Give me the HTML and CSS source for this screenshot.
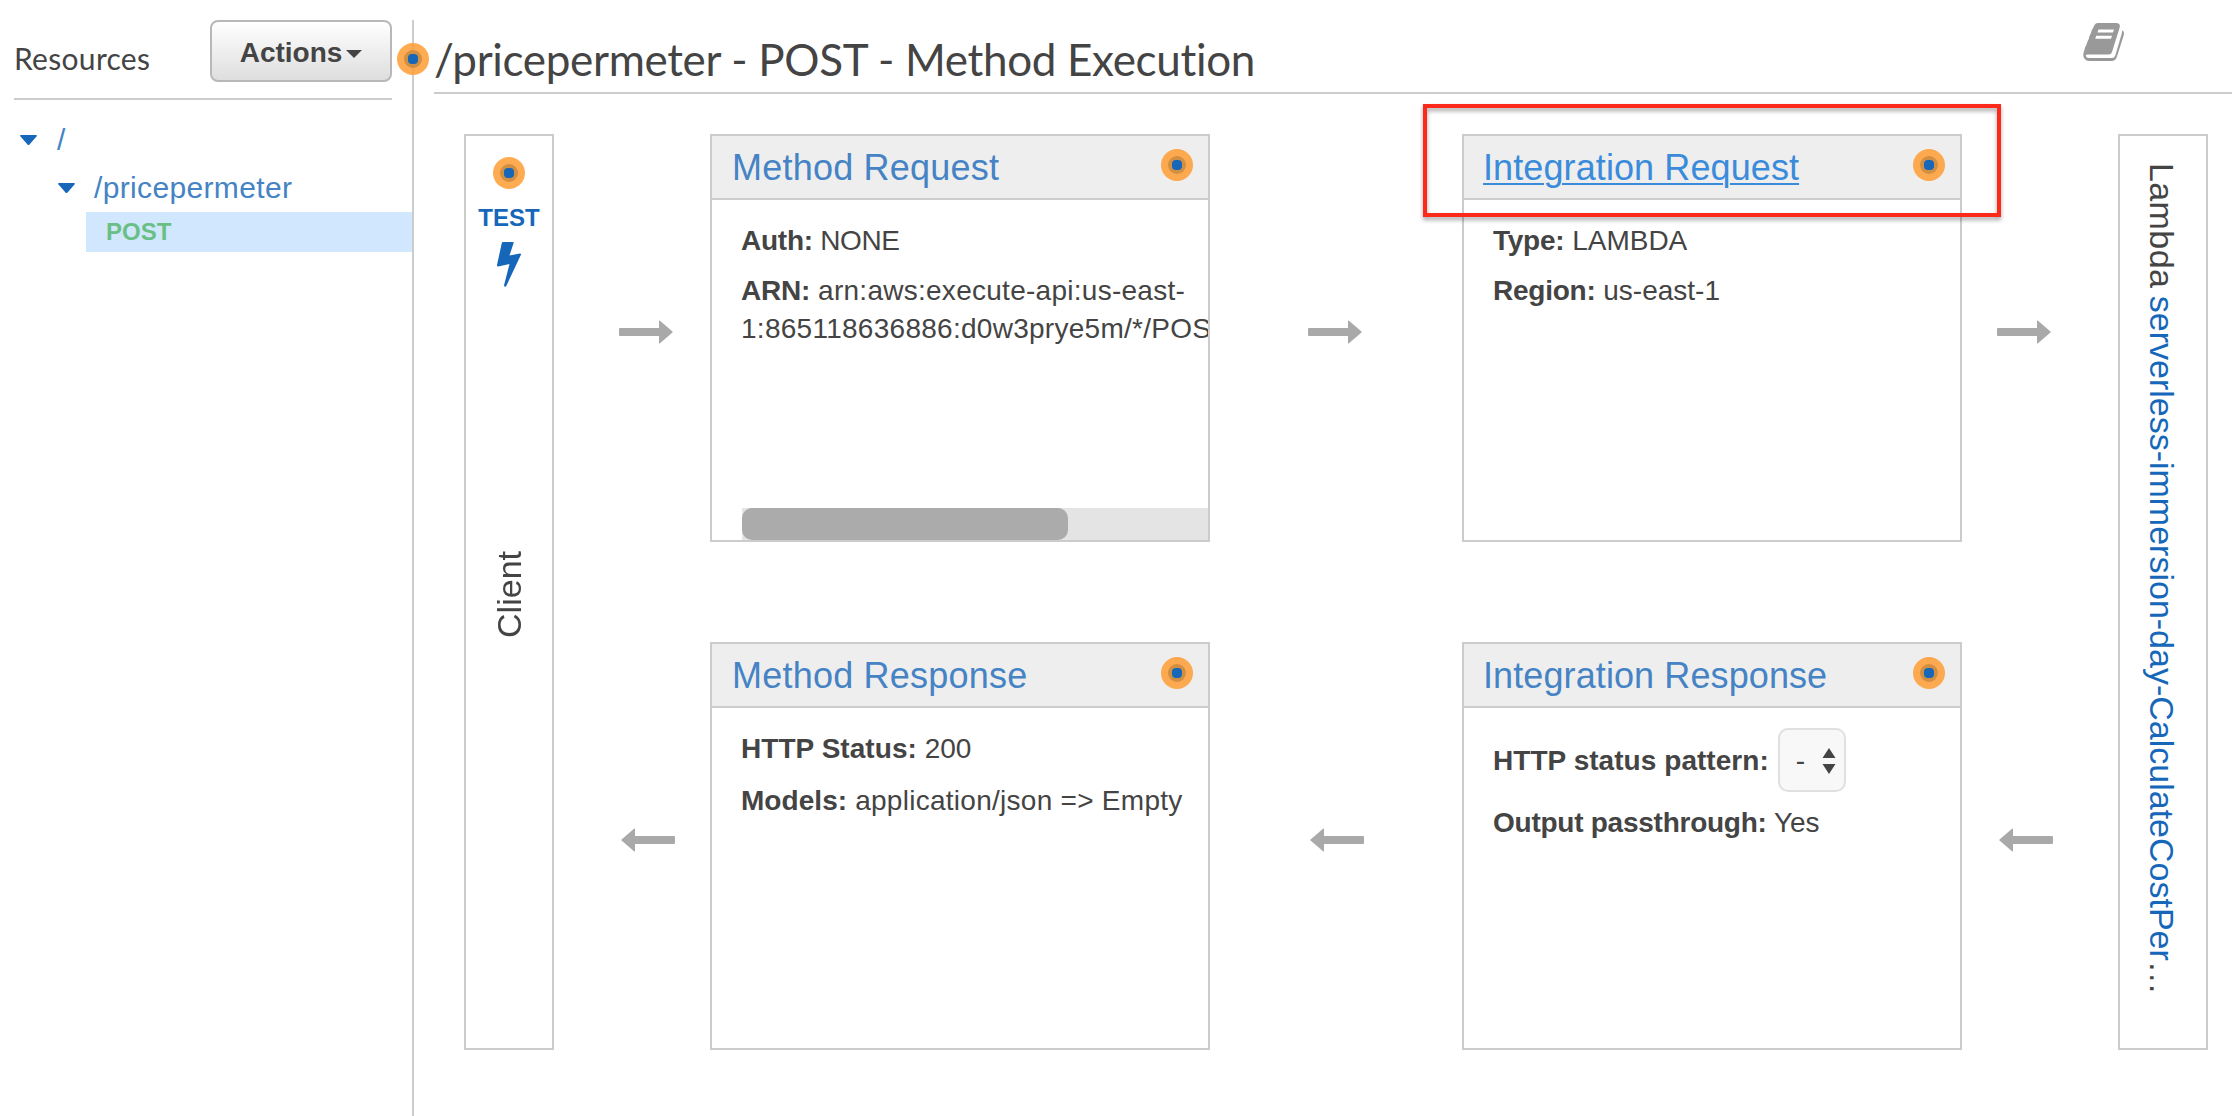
FILE: index.html
```html
<!DOCTYPE html>
<html lang="en">
<head>
<meta charset="utf-8">
<title>Method Execution</title>
<link rel="stylesheet" href="styles.css">
</head>
<body>
<svg class="defs" aria-hidden="true">
  <symbol id="arrow" viewBox="0 0 54 24"><path d="M1 8H40V1Q40 0 41 .8L54 12L41 23.2Q40 24 40 23V16H1Q0 16 0 15V9Q0 8 1 8Z"/></symbol>
  <symbol id="hotspot" viewBox="0 0 32 32">
    <circle cx="16" cy="16" r="16" fill="#ff9d35" fill-opacity=".86"/>
    <circle cx="16" cy="16" r="9" fill="#d08f43"/>
    <rect x="11" y="11" width="10" height="10" rx="4" fill="#1667ba"/>
  </symbol>
</svg>
<div class="app">
  <aside class="sidebar">
    <div class="sidebar-head">
      <h2 class="sidebar-title">Resources</h2>
      <button class="actions">Actions<svg class="actions-caret" viewBox="0 0 16 8"><path d="M0 0H16L8 8Z"/></svg></button>
    </div>
    <div class="tree">
      <div class="node node-root"><svg class="caret" viewBox="0 0 17 10"><path d="M1 0H16Q17.500 0 16.500 1.500L9.500 9.500Q8.500 10.500 7.500 9.500L.5 1.500Q-.5 0 1 0Z"/></svg><span>/</span></div>
      <div class="node node-child"><svg class="caret" viewBox="0 0 17 10"><path d="M1 0H16Q17.500 0 16.500 1.500L9.500 9.500Q8.500 10.500 7.500 9.500L.5 1.500Q-.5 0 1 0Z"/></svg><span class="node-name">/pricepermeter</span></div>
      <div class="verb">POST</div>
    </div>
  </aside>
  <main class="main">
    <svg class="hotspot pane-hotspot"><use href="#hotspot"/></svg>
    <header class="main-head">
      <h1 class="title"><span class="title-text">/pricepermeter - POST - Method Execution</span></h1>
      <svg class="book" viewBox="0 0 42 38"><path fill-rule="evenodd" d="M15 0H33Q38 0 36.500 5L29 29Q28.200 31.500 25.500 31.500H5Q2.500 31.500 2.800 33Q3.200 35 6 35H29Q31.500 35 32.300 32.500L38.500 11.500Q39.200 9.500 39 7.500Q41.800 8.500 40.800 12L34 33.500Q32.500 38 28.500 38H6.500Q2.500 38 .8 34.500Q-.2 32.500 .8 29Q1.500 27 2 24.500Q3.500 22.500 4.300 19Q6 16.500 6.500 13Q8.300 10 8.800 7Q10.500 4.500 11.500 2Q12.500 0 15 0ZM15.500 6.500L14.500 9.500H30L31 6.500ZM13.200 12.800L12.200 15.800H28L29 12.800Z"/></svg>
    </header>
    <section class="flow">
      <div class="endpoint client">
        <svg class="hotspot"><use href="#hotspot"/></svg>
        <span class="test">TEST</span>
        <svg class="bolt" viewBox="0 0 24 45"><path d="M6 0H16Q17 0 16.600 1L12.500 13.500L23 11.500Q24.500 11.400 23.800 13L9.300 44Q8.500 45.200 7.500 44.500Q7 44 7.100 43L12.500 22L1.200 24.500Q-.2 24.600 0 23L4.800 1Q5 0 6 0Z"/></svg>
        <div class="client-slot"><span class="client-label">Client</span></div>
      </div>
      <svg class="arrow a1"><use href="#arrow"/></svg>
      <article class="card method-request">
        <header class="card-head"><a class="card-link">Method Request</a><svg class="hotspot"><use href="#hotspot"/></svg></header>
        <div class="card-body">
          <p class="caps"><b>Auth:</b> NONE</p>
          <p class="wide"><b>ARN:</b> arn:aws:execute-api:us-east-<br>1:865118636886:d0w3prye5m/*/POS</p>
          <div class="scroll"><div class="thumb"></div></div>
        </div>
      </article>
      <svg class="arrow a2"><use href="#arrow"/></svg>
      <article class="card integration-request">
        <header class="card-head"><a class="card-link hovered">Integration Request</a><svg class="hotspot"><use href="#hotspot"/></svg></header>
        <div class="card-body">
          <p><b>Type:</b> LAMBDA</p>
          <p><b>Region:</b> us-east-1</p>
        </div>
        <div class="callout"></div>
      </article>
      <svg class="arrow a3"><use href="#arrow"/></svg>
      <div class="endpoint lambda"><span class="lambda-label"><span class="lambda-kind">Lambda</span> <a>serverless-immersion-day-CalculateCostPer</a>…</span></div>
      <svg class="arrow back a4"><use href="#arrow"/></svg>
      <article class="card method-response">
        <header class="card-head"><a class="card-link">Method Response</a><svg class="hotspot"><use href="#hotspot"/></svg></header>
        <div class="card-body">
          <p class="status"><b>HTTP Status:</b> 200</p>
          <p class="wide models"><b>Models:</b> application/json =&gt; Empty</p>
        </div>
      </article>
      <svg class="arrow back a5"><use href="#arrow"/></svg>
      <article class="card integration-response">
        <header class="card-head"><a class="card-link">Integration Response</a><svg class="hotspot"><use href="#hotspot"/></svg></header>
        <div class="card-body">
          <div class="field"><b>HTTP status pattern:</b><span class="select">-<svg class="updown" viewBox="0 0 14 26"><path d="M7 0L13.500 10H.5ZM7 26L.5 16H13.500Z"/></svg></span></div>
          <p><b>Output passthrough:</b> Yes</p>
        </div>
      </article>
      <svg class="arrow back a6"><use href="#arrow"/></svg>
    </section>
  </main>
</div>
</body>
</html>
```

FILE: styles.css
```css
* { box-sizing: border-box; }
body { margin: 0; background: #fff; color: #444; font: 28px/38px "Liberation Sans", Arial, sans-serif; }
h1, h2, p { margin: 0; font-weight: 400; }
svg { display: block; flex: none; }
.defs { position: absolute; width: 0; height: 0; }
.app { display: flex; height: 1116px; padding-top: 20px; overflow: hidden; }

.sidebar { width: 412px; flex: none; }
.sidebar-head { display: flex; justify-content: space-between; align-items: flex-start; height: 80px; margin: 0 20px 0 14px; border-bottom: 2px solid #ccc; }
.sidebar-title { font: 30px/38px Lato, sans-serif; letter-spacing: .3px; padding-top: 19px; }
.actions { display: flex; align-items: center; justify-content: center; gap: 4px; width: 182px; height: 62px; padding: 3px 2px 0 2px; border: 2px solid #b8b8b8; border-radius: 8px; background: linear-gradient(#fff, #dedede); color: #444; font: bold 28px "Liberation Sans", Arial, sans-serif; }
.actions-caret { width: 16px; height: 8px; fill: #444; margin-top: 2px; }
.tree { padding-top: 20px; color: #4583c4; }
.node { display: flex; align-items: center; height: 40px; font-size: 30px; }
.node-root { padding-left: 20px; gap: 20px; }
.node-child { padding-left: 58px; gap: 19px; margin-top: 8px; }
.node-name { letter-spacing: .35px; }
.caret { width: 17px; height: 10px; fill: #1667ba; }
.verb { height: 40px; margin: 4px 0 0 86px; padding-left: 20px; background: #d1e7fe; color: #6abf85; font-weight: bold; font-size: 24px; line-height: 40px; }

.main { position: relative; flex: 1; border-left: 2px solid #ccc; }
.hotspot { width: 32px; height: 32px; }
.pane-hotspot { position: absolute; left: -17px; top: 23px; }
.main-head { display: flex; justify-content: space-between; height: 74px; margin-left: 20px; padding-right: 107px; border-bottom: 2px solid #ccc; }
.title { font: 44px/54px Lato, sans-serif; letter-spacing: -.33px; padding-top: 12px; white-space: nowrap; }
.book { width: 42px; height: 38px; margin-top: 3px; fill: #999; }

.flow { display: grid; grid-template-columns: 90px 156px 500px 252px 500px 156px 90px; grid-template-rows: 408px 408px; row-gap: 100px; margin: 40px 0 0 50px; }
.endpoint { grid-row: 1 / 3; border: 2px solid #ccc; display: flex; flex-direction: column; align-items: center; }
.client { grid-column: 1; padding-top: 21px; position: relative; }
.test { margin-top: 10px; color: #1667ba; font-weight: bold; font-size: 24px; line-height: 38px; }
.bolt { width: 24px; height: 45px; margin-top: 5px; fill: #1667ba; }
.client-slot { display: flex; margin-top: 264px; }
.client-label { writing-mode: vertical-rl; transform: rotate(180deg); font-size: 34px; }
.lambda { grid-column: 7; padding: 27px 2px 0 0; }
.lambda-label { writing-mode: vertical-rl; font-size: 34px; white-space: nowrap; }
.lambda-kind { letter-spacing: .4px; margin-bottom: -2px; }
.lambda-label a { color: #1667ba; }

.arrow { width: 54px; height: 24px; margin-top: 186px; fill: #a9a9a9; }
.a1 { margin-left: 65px; }
.a2 { margin-left: 98px; }
.a3 { margin-left: 35px; }
.back { transform: scaleX(-1); }
.a4 { grid-column: 2; margin-left: 67px; }
.a5 { margin-left: 100px; }
.a6 { margin-left: 37px; }

.card { position: relative; border: 2px solid #ccc; display: flex; flex-direction: column; min-width: 0; }
.card-head { display: flex; justify-content: space-between; height: 64px; padding: 0 15px 0 19px; background: #eee; border-bottom: 2px solid #ccc; }
.card-head .hotspot { margin-top: 13px; }
.card-link { color: #4583c4; font-size: 36px; line-height: 64px; letter-spacing: .1px; }
.method-request .card-link, .method-response .card-link { padding-left: 1px; letter-spacing: .22px; }
.card-link.hovered { color: #3b8bdb; text-decoration: underline; text-decoration-thickness: 2px; text-underline-offset: 3px; }
.card-body { flex: 1; display: flex; flex-direction: column; gap: 12px; padding: 22px 0 0 29px; overflow: hidden; white-space: nowrap; }
.card-body b { letter-spacing: -.25px; }
.card-body .caps { letter-spacing: -.4px; }
.card-body .wide { letter-spacing: .27px; }
.status b, .models b, .field b { letter-spacing: .05px; }
.method-response .card-body { gap: 14px; }
.integration-response .card-body { gap: 11px; padding-top: 20px; }
.integration-response p { padding-top: 1px; }
.scroll { height: 32px; margin: auto 0 0 1px; background: #e4e4e4; }
.thumb { width: 326px; height: 32px; border-radius: 10px; background: #ababab; }
.field { display: flex; align-items: center; gap: 9px; height: 64px; }
.field b { padding-top: 2px; }
.select { display: flex; align-items: center; justify-content: space-between; width: 68px; height: 64px; padding: 2px 8px 0 16px; border: 2px solid #e0e0e0; border-radius: 10px; background: #f8f8f8; }
.updown { width: 14px; height: 26px; fill: #444; }
.callout { position: absolute; left: -41px; top: -32px; width: 578px; height: 113px; border: 4px solid #fd2a1c; filter: drop-shadow(0 3px 2px rgba(0, 0, 0, .35)); }
```
